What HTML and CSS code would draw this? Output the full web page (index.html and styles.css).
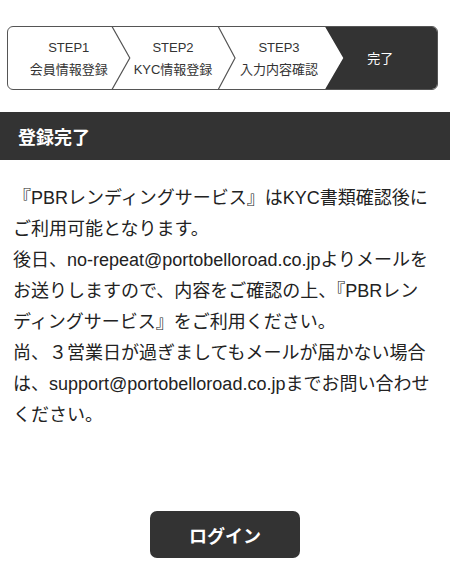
FILE: index.html
```html
<!DOCTYPE html>
<html lang="ja">
<head>
<meta charset="utf-8">
<title>登録完了</title>
<link rel="stylesheet" href="styles.css">
</head>
<body>
<div class="stepper">
  <svg class="stepper-bg" viewBox="0 0 428 62" preserveAspectRatio="none" aria-hidden="true">
    <path d="M316.5 0 L428 0 L428 62 L316.5 62 L334.5 31 Z" fill="#333"/>
    <polyline points="103.5,-1 121.5,31 103.5,63" fill="none" stroke="#555" stroke-width="1.2"/>
    <polyline points="209.5,-1 226.5,31 209.5,63" fill="none" stroke="#555" stroke-width="1.2"/>
  </svg>
  <div class="step s1"><span class="step-no">STEP1</span><span class="step-name">会員情報登録</span></div>
  <div class="step s2"><span class="step-no">STEP2</span><span class="step-name">KYC情報登録</span></div>
  <div class="step s3"><span class="step-no">STEP3</span><span class="step-name">入力内容確認</span></div>
  <div class="step s4 current"><span class="step-name">完了</span></div>
</div>

<h1 class="title-bar">登録完了</h1>

<div class="message">
  <p>『PBRレンディングサービス』はKYC書類確認後に<br>ご利用可能となります。</p>
  <p>後日、no-repeat@portobelloroad.co.jpよりメールを<br>お送りしますので、内容をご確認の上、『PBRレン<br>ディングサービス』をご利用ください。</p>
  <p>尚、３営業日が過ぎましてもメールが届かない場合<br>は、support@portobelloroad.co.jpまでお問い合わせ<br>ください。</p>
</div>

<div class="actions">
  <button class="login-btn" type="button">ログイン</button>
</div>
</body>
</html>
```

FILE: styles.css
```css
html, body {
  margin: 0;
  padding: 0;
  background: #fff;
}

body {
  font-family: "Liberation Sans", "Noto Sans CJK JP", sans-serif;
  color: #222;
}

.stepper {
  position: relative;
  display: flex;
  height: 62px;
  margin: 26px 12px 0 7px;
  border: 1.5px solid #555;
  border-radius: 6px;
  overflow: hidden;
}

.stepper-bg {
  position: absolute;
  left: 0;
  top: 0;
  width: 100%;
  height: 100%;
}

.step {
  position: relative;
  display: flex;
  flex-direction: column;
  align-items: center;
  justify-content: center;
  gap: 3px;
  font-size: 13px;
  line-height: 19px;
  color: #333;
  white-space: nowrap;
}

.s1 { width: 121.5px; padding-top: 1px; }
.s2 { width: 123px; margin-left: -18px; padding-top: 1px; }
.s3 { width: 125px; margin-left: -18px; padding-top: 1px; }
.s4 { flex: 1; margin-left: -18px; }

.step.current {
  color: #fff;
}

.title-bar {
  margin: 22px 0 0;
  height: 48px;
  padding: 0 18px;
  display: flex;
  align-items: center;
  background: #333;
  color: #fff;
  font-size: 18px;
  font-weight: bold;
}

.message {
  padding: 23px 0 0 13px;
  font-size: 18px;
  line-height: 31px;
  color: #222;
  white-space: nowrap;
}

.message p {
  margin: 0;
}

.actions {
  display: flex;
  justify-content: center;
  padding-top: 80px;
}

.login-btn {
  width: 150px;
  height: 47px;
  border: none;
  border-radius: 7px;
  background: #333;
  color: #fff;
  font-family: "Liberation Sans", "Noto Sans CJK JP", sans-serif;
  font-size: 18px;
  font-weight: bold;
  cursor: pointer;
}
```
